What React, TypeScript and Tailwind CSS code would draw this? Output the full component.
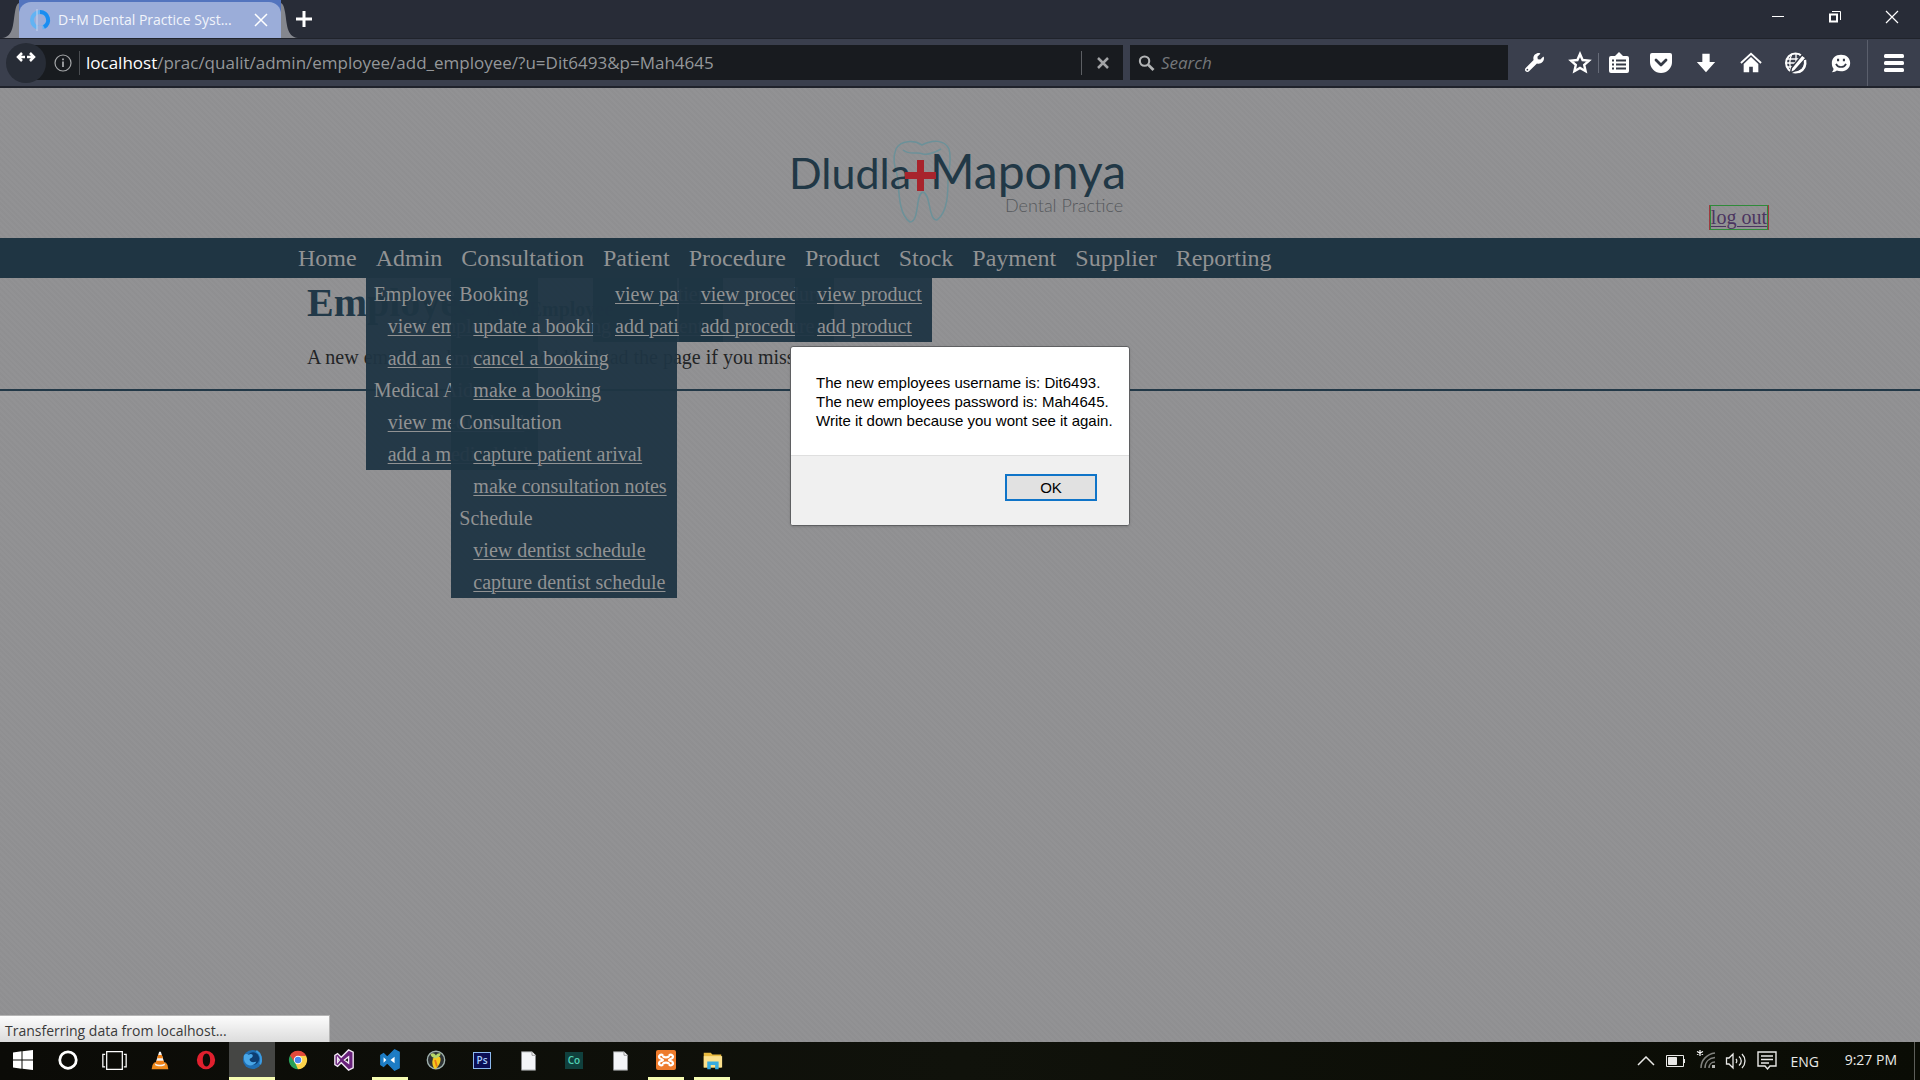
import type { ReactNode } from 'react';
import { FaWrench } from 'react-icons/fa';

type MenuEntry = { heading?: string; link?: string };
type MenuItem = { label: string; entries?: MenuEntry[] };

const MENU: MenuItem[] = [
  { label: 'Home' },
  {
    label: 'Admin',
    entries: [
      { heading: 'Employee' },
      { link: 'view employee' },
      { link: 'add an employee' },
      { heading: 'Medical Aid' },
      { link: 'view medical aid' },
      { link: 'add a medical aid' },
    ],
  },
  {
    label: 'Consultation',
    entries: [
      { heading: 'Booking' },
      { link: 'update a booking' },
      { link: 'cancel a booking' },
      { link: 'make a booking' },
      { heading: 'Consultation' },
      { link: 'capture patient arival' },
      { link: 'make consultation notes' },
      { heading: 'Schedule' },
      { link: 'view dentist schedule' },
      { link: 'capture dentist schedule' },
    ],
  },
  { label: 'Patient', entries: [{ link: 'view patient' }, { link: 'add patient' }] },
  { label: 'Procedure', entries: [{ link: 'view procedure' }, { link: 'add procedure' }] },
  { label: 'Product', entries: [{ link: 'view product' }, { link: 'add product' }] },
  { label: 'Stock' },
  { label: 'Payment' },
  { label: 'Supplier' },
  { label: 'Reporting' },
];

function Svg({ size = 24, children, label }: { size?: number; children: ReactNode; label?: string }) {
  return (
    <svg width={size} height={size} viewBox="0 0 24 24" fill="none" aria-label={label} className="shrink-0">
      {children}
    </svg>
  );
}

function ToolButton({ label, children }: { label: string; children: ReactNode }) {
  return (
    <button type="button" aria-label={label} className="flex h-9 w-[45px] shrink-0 items-center justify-center text-white">
      {children}
    </button>
  );
}

function TabStrip() {
  return (
    <div className="flex h-[39px] shrink-0 items-stretch border-b border-[#20232b] bg-[#282c37]">
      <svg width="19" height="38" viewBox="0 0 19 38" className="shrink-0">
        <path d="M2 38C14 37 13 22 15 12C16 6 17 4 19 3V38Z" fill="#85878e" />
      </svg>
      <div className="flex w-[262px] shrink-0 bg-[#5374be]">
        <div className="mt-[2px] flex flex-1 items-center rounded-t-xl bg-[#9badd9] pl-[10px] pr-3">
          <svg width="22" height="22" viewBox="0 0 22 22" fill="none" className="shrink-0">
            <circle cx="11" cy="11" r="8" stroke="#62b3f3" strokeWidth="4" />
            <path d="M11 3a8 8 0 0 1 4 15" stroke="#1a8df0" strokeWidth="4" />
            <path d="M11 17v5" stroke="#9badd9" strokeWidth="5" />
            <path d="M8 0v22" stroke="#c9d4ee" />
          </svg>
          <span className="ml-[7px] flex-1 whitespace-nowrap text-sm text-[#f1f4fb]">D+M Dental Practice Syst...</span>
          <button type="button" aria-label="Close tab" className="text-white">
            <svg width="16" height="16" viewBox="0 0 16 16" stroke="currentColor" strokeWidth="1.5">
              <path d="M2 2l12 12M14 2L2 14" />
            </svg>
          </button>
        </div>
      </div>
      <svg width="19" height="38" viewBox="0 0 19 38" className="shrink-0">
        <path d="M17 38C5 37 6 22 4 12C3 6 2 4 0 3V38Z" fill="#85878e" />
      </svg>
      <button type="button" aria-label="New tab" className="-ml-2 flex w-6 items-center justify-center text-white">
        <svg width="18" height="18" viewBox="0 0 18 18" stroke="currentColor" strokeWidth="3">
          <path d="M9 1v16M1 9h16" />
        </svg>
      </button>
      <div className="ml-auto flex items-center pb-1">
        <button type="button" aria-label="Minimize" className="flex w-[57px] justify-center text-white">
          <svg width="14" height="14" viewBox="0 0 14 14" stroke="currentColor">
            <path d="M1 6.500h12" />
          </svg>
        </button>
        <button type="button" aria-label="Restore" className="flex w-[57px] justify-center text-white">
          <svg width="14" height="14" viewBox="0 0 14 14" fill="none" stroke="currentColor">
            <path d="M2 4.500h7v7H2z" strokeWidth="2" />
            <path d="M4 1.500h8.500V10" />
          </svg>
        </button>
        <button type="button" aria-label="Close" className="flex w-[57px] justify-center text-white">
          <svg width="14" height="14" viewBox="0 0 14 14" stroke="currentColor" strokeWidth="1.200">
            <path d="M1 1l12 12M13 1L1 13" />
          </svg>
        </button>
      </div>
    </div>
  );
}

function Toolbar() {
  return (
    <div className="flex h-[49px] shrink-0 items-center border-b-2 border-[#20232c] bg-[#3a3f4d]">
      <div className="ml-[6px] flex flex-1 items-center">
        <button type="button" aria-label="Back and forward" className="z-10 flex size-10 shrink-0 items-center justify-center rounded-full bg-[#272c36]">
          <svg width="20" height="20" viewBox="0 0 20 20" fill="none" stroke="#fff" strokeWidth="2.500" className="mb-3">
            <path d="M9 10H3M6 6L2 10l4 4M11 10h6M14 6l4 4l-4 4" />
          </svg>
        </button>
        <div className="-ml-4 flex h-[35px] flex-1 items-center bg-[#181b1f] pl-6">
          <svg width="18" height="18" viewBox="0 0 18 18" fill="none" className="shrink-0">
            <circle cx="9" cy="9" r="8" stroke="#a4a6a8" strokeWidth="1.200" />
            <path d="M9 7.500V13M9 4.500v1.800" stroke="#a4a6a8" strokeWidth="1.800" />
          </svg>
          <div className="ml-[7px] h-6 w-px bg-[#4b4e52]" />
          <div className="ml-[6px] flex-1 whitespace-nowrap text-[17px] text-[#94979a]">
            <span className="text-white">localhost</span>/prac/qualit/admin/employee/add_employee/?u=Dit6493&amp;p=Mah4645
          </div>
          <div className="h-6 w-px bg-[#5c5f63]" />
          <button type="button" aria-label="Stop" className="flex w-[41px] justify-center text-[#a2a4a6]">
            <svg width="12" height="12" viewBox="0 0 12 12" stroke="currentColor" strokeWidth="2.500">
              <path d="M1 1l10 10M11 1L1 11" />
            </svg>
          </button>
        </div>
      </div>
      <label className="ml-[7px] flex h-[35px] w-[378px] shrink-0 items-center bg-[#181b1f] pl-2">
        <svg width="18" height="18" viewBox="0 0 18 18" fill="none" stroke="#b2b4b5">
          <circle cx="7" cy="7" r="5" strokeWidth="2.200" />
          <path d="M11 11l5.500 5.500" strokeWidth="3" />
        </svg>
        <input type="text" placeholder="Search" aria-label="Search" className="ml-[6px] w-full bg-transparent text-[17px] placeholder:italic placeholder:text-[#74777a]" />
      </label>
      <div className="flex shrink-0 items-center pl-1">
        <ToolButton label="Developer tools">
          <FaWrench size={19} className="-scale-x-100 rotate-90" />
        </ToolButton>
        <ToolButton label="Bookmark this page">
          <Svg size={24}>
            <path d="M12 3l2.600 6 6.400.600-4.800 4.300 1.400 6.300L12 17l-5.600 3.200 1.400-6.300L3 9.600l6.400-.600z" stroke="#fff" strokeWidth="2.400" />
          </Svg>
        </ToolButton>
        <div className="-ml-1 h-5 w-px bg-[#666b78]" />
        <button type="button" aria-label="Show bookmarks" className="flex h-9 w-[39px] shrink-0 items-center justify-center">
          <Svg size={24}>
            <path d="M4 5h4l4-4 4 4h4a2 2 0 0 1 2 2v13a2 2 0 0 1-2 2H4a2 2 0 0 1-2-2V7a2 2 0 0 1 2-2z" fill="#fff" />
            <path d="M5 9.500h2M9 9.500h10M5 13.500h2M9 13.500h10M5 17.500h2M9 17.500h10" stroke="#343945" strokeWidth="1.800" />
          </Svg>
        </button>
        <ToolButton label="Save to Pocket">
          <Svg size={24}>
            <path d="M3 2h18a2 2 0 0 1 2 2v7a11 11 0 0 1-22 0V4a2 2 0 0 1 2-2z" fill="#fff" />
            <path d="M7 9l5 5 5-5" stroke="#343945" strokeWidth="2.800" strokeLinecap="round" strokeLinejoin="round" />
          </Svg>
        </ToolButton>
        <ToolButton label="Downloads">
          <Svg size={22}>
            <path d="M8 2h8v9h6L12 22 2 11h6z" fill="#fff" />
          </Svg>
        </ToolButton>
        <ToolButton label="Home">
          <Svg size={22}>
            <path d="M1 12L12 2l11 10" stroke="#fff" strokeWidth="2" />
            <path d="M4 13l8-7.500L20 13v9h-6v-6h-4v6H4z" fill="#fff" />
          </Svg>
        </ToolButton>
        <ToolButton label="Web editor">
          <Svg size={24}>
            <circle cx="11.500" cy="12" r="9.500" stroke="#fff" strokeWidth="2" />
            <path d="M3 8h15M2 12h12M3 16h8M8 3c-3 5-3 13 0 18M12 2v13M16 4c1 2 2 4 2 7" stroke="#fff" strokeWidth="1.300" />
            <path d="M6.500 22l1-5L18 4l4 3L10.500 20z" fill="#fff" stroke="#343945" strokeWidth="1.400" />
            <path d="M21 9c1 5-1 10-6 12" stroke="#fff" strokeWidth="2.500" />
          </Svg>
        </ToolButton>
        <ToolButton label="Chat">
          <Svg size={20}>
            <path d="M12 2c6.500 0 11 4 11 10s-4.500 10-11 10c-2 0-3.500-.400-5-1-1.500 1.300-3.500 2-6 2 1.500-1.200 2-2.500 2-4-1.400-2-2-4-2-7C1 6 5.500 2 12 2z" fill="#fff" />
            <path d="M8.500 7v3M15.500 7v3" stroke="#343945" strokeWidth="2.500" />
            <path d="M6 13c2 5 10 5 12 0" stroke="#343945" strokeWidth="2" />
          </Svg>
        </ToolButton>
        <div className="ml-1 h-[46px] w-px bg-[#5a5f6c]" />
        <button type="button" aria-label="Open menu" className="flex h-9 w-[52px] shrink-0 items-center justify-center">
          <svg width="20" height="18" viewBox="0 0 20 18" fill="#fff">
            <rect y="0" width="20" height="4" rx="1.500" />
            <rect y="7" width="20" height="4" rx="1.500" />
            <rect y="14" width="20" height="4" rx="1.500" />
          </svg>
        </button>
      </div>
    </div>
  );
}

function Logo() {
  return (
    <svg width="340" height="90" viewBox="0 0 340 90" aria-label="Dludla+Maponya Dental Practice" className="font-[Lato,sans-serif]">
      <path
        d="M132 11c-8-5-21-5-26 4c-5 12 1 22 2 31c1 13 1 35 12 42c10-1 5-28 13-30c8 2 5 28 14 28c11-8 11-28 11-41c1-10 4-20 1-30c-5-10-17-9-27-4zM113 16c8 6 13 1 20 4c5 1 11-1 18-5"
        fill="none"
        stroke="#6c9199"
        strokeWidth="1.500"
      />
      <text x="-1" y="55" fontSize="43" fill="#213846">Dludla</text>
      <text x="140" y="55" fontSize="48" fill="#213846">Maponya</text>
      <path d="M127 26h7v12h12v7h-12v12h-7V45h-12v-7h12z" fill="#a8242c" />
      <text x="215" y="78" fontSize="18" fontWeight="300" fill="#55585c">Dental Practice</text>
    </svg>
  );
}

function NavBar() {
  return (
    <nav className="relative z-10 bg-[#1f3543] pl-72">
      <ul className="flex">
        {MENU.map((item) => (
          <li key={item.label} className="relative flex h-10 items-center pl-[10px] pr-[9px]">
            <span className="text-2xl text-[#919293]">{item.label}</span>
            {item.entries && (
              <ul className="absolute left-0 top-full whitespace-nowrap bg-[#1f3543]/95 pl-2 pr-[10px] text-xl leading-8 text-[#919293]">
                {item.entries.map((entry) =>
                  entry.heading ? (
                    <li key={entry.heading}>{entry.heading}</li>
                  ) : (
                    <li key={entry.link} className="pl-[14px]">
                      <a href="#" className="underline decoration-1 underline-offset-2">{entry.link}</a>
                    </li>
                  ),
                )}
              </ul>
            )}
          </li>
        ))}
      </ul>
    </nav>
  );
}

function AlertDialog() {
  return (
    <div role="alertdialog" aria-label="New employee details" className="flex flex-col overflow-hidden rounded-[3px] border border-[#5f6062] bg-white font-['Liberation_Sans',sans-serif] text-[15px] leading-[19px] text-black shadow-sm">
      <div className="w-[338px] whitespace-nowrap pb-[25px] pl-[25px] pt-[26px]">
        <p>The new employees username is: Dit6493.</p>
        <p>The new employees password is: Mah4645.</p>
        <p>Write it down because you wont see it again.</p>
      </div>
      <div className="flex justify-end border-t border-[#dfdfdf] bg-[#f0f0f0] pb-[24px] pr-8 pt-[18px]">
        <button type="button" className="h-[27px] w-[92px] border-2 border-[#0f74c8] bg-[#e1e1e1]">OK</button>
      </div>
    </div>
  );
}

function Page() {
  return (
    <div className="relative min-h-0 flex-1 bg-[#919193] bg-[repeating-linear-gradient(45deg,rgba(0,0,0,0.01)_0_2px,rgba(255,255,255,0.01)_2px_4px)] font-['Liberation_Serif',serif]">
      <header className="grid h-[150px] grid-cols-3 px-[151px]">
        <div className="col-start-2 mt-[46px] justify-self-center">
          <Logo />
        </div>
        <div className="mb-2 self-end justify-self-end border-x border-[#a03a3f] text-xl leading-[23px]">
          <a href="#" className="block border border-[#2f8a3a] text-[#4b3560] underline decoration-1 underline-offset-2">log out</a>
        </div>
      </header>
      <NavBar />
      <main className="h-[113px] border-b-2 border-[#223847] pl-[307px]">
        <h1 className="flex items-baseline gap-[10px] text-[40px] font-bold leading-[50px] text-[#213848]">
          Employee<span className="text-xl">New Employee</span>
        </h1>
        <p className="mt-[15px] text-xl leading-7 text-[#222426]">
          A new employee has been added, reload the page if you missed it.
        </p>
      </main>
      <div className="absolute inset-x-0 top-[258px] z-20 flex justify-center">
        <AlertDialog />
      </div>
      <div className="absolute bottom-0 left-0 h-[27px] w-[330px] border-r border-t border-[#b5b5b5] bg-gradient-to-b from-[#fcfcfc] to-[#dcdcdc] pl-[5px] text-sm leading-[30px] text-[#3a3a3a]">
        <span className="font-['Open_Sans',sans-serif]">Transferring data from localhost...</span>
      </div>
    </div>
  );
}

function VsMark({ fill, stroke }: { fill: string; stroke: string }) {
  return (
    <Svg size={22}>
      <path d="M17 1l5 2.500v17L17 23l-8-8-4 4-3-2V7l3-2 4 4zM5 9.500v5L7 12zM17 8.500L12.500 12l4.500 3.500z" fill={fill} stroke={stroke} strokeWidth="1.500" fillRule="evenodd" />
      {fill === stroke && <path d="M5 9v6l3-3zM17 8.500L12.500 12l4.500 3.500z" fill="#fff" />}
    </Svg>
  );
}

function DocIcon() {
  return (
    <Svg size={21}>
      <path d="M4 2h12l4 4v17H4z" fill="#f4f5f8" stroke="#8c8d8f" />
      <path d="M16 2v4h4" fill="#fff" stroke="#8c8d8f" />
    </Svg>
  );
}

type App = { name: string; icon: ReactNode; state?: 'active' | 'open' };

const APPS: App[] = [
  {
    name: 'Start',
    icon: (
      <Svg size={24}>
        <path d="M2 4.500l8.500-1.200v8.200H2zM11.500 3.200L22 2v9.500H11.500zM2 12.500h8.500v8.200L2 19.500zM11.500 12.500H22V22l-10.500-1.200z" fill="#fff" />
      </Svg>
    ),
  },
  { name: 'Cortana', icon: <Svg size={22}><circle cx="12" cy="12" r="9" stroke="#fff" strokeWidth="3" /></Svg> },
  {
    name: 'Task view',
    icon: (
      <Svg size={25}>
        <path d="M4.500 3.500h15v17h-15zM3 6H.800v12H3M21 6h2.200v12H21" stroke="#fff" strokeWidth="1.200" />
      </Svg>
    ),
  },
  {
    name: 'VLC',
    icon: (
      <Svg size={20}>
        <path d="M3 18l2-3h14l2 3 1 5H2z" fill="#ef8a1c" />
        <path d="M11 2h2l5 16c-2 2-10 2-12 0z" fill="#f3f3f3" />
        <path d="M9.800 6h4.400l1.300 4h-7zM7.500 13h9l1 3.500c-3 1.500-8 1.500-11 0z" fill="#f07f13" />
      </Svg>
    ),
  },
  {
    name: 'Opera',
    icon: (
      <Svg size={22}>
        <path d="M12 2a10 10 0 1 0 0 20 10 10 0 1 0 0-20zM12.500 5c2.500 0 4 3 4 7s-1.500 7-4 7-4-3-4-7 1.500-7 4-7z" fill="#e0202e" fillRule="evenodd" />
      </Svg>
    ),
  },
  {
    name: 'Firefox Developer Edition',
    state: 'active',
    icon: (
      <Svg size={23}>
        <circle cx="12" cy="12" r="10" fill="#1f6fb4" />
        <circle cx="12.500" cy="11" r="6.500" fill="#0d3d72" />
        <path d="M3 8c2-3 4-1 5-1 3-2 5 0 4 2s-3 1-3 3 3 4 7 2c-1 4-8 6-11 2-2-2-2-5-2-8z" fill="#49a7e8" />
        <path d="M16 3c5 3 6 9 4 14" stroke="#3c9be0" strokeWidth="2" />
      </Svg>
    ),
  },
  {
    name: 'Chrome',
    icon: (
      <Svg size={20}>
        <path d="M12 12L2.500 6.500A11 11 0 0 1 21.500 6.500z" fill="#e24a3b" />
        <path d="M12 12l9.500-5.500A11 11 0 0 1 12 23z" fill="#fdd34a" />
        <path d="M12 12v11A11 11 0 0 1 2.500 6.500z" fill="#28a15a" />
        <path d="M12 7h10L16 14.500 12 23l-4-9z" fill="#fdd34a" />
        <path d="M12 7h9.700A11 11 0 0 0 2.500 6.500L7.700 14.500z" fill="#e24a3b" />
        <circle cx="12" cy="12" r="5" fill="#fff" />
        <circle cx="12" cy="12" r="3.900" fill="#4a87ee" />
      </Svg>
    ),
  },
  { name: 'Visual Studio', icon: <VsMark fill="#68217a" stroke="#f0e6f3" /> },
  { name: 'Visual Studio Code', state: 'open', icon: <VsMark fill="#1d7cc4" stroke="#1d7cc4" /> },
  {
    name: 'FL Studio',
    icon: (
      <Svg size={22}>
        <circle cx="12" cy="12" r="9.500" fill="#2d3234" stroke="#9fb0ad" strokeWidth="1.500" />
        <path d="M9 10c3-3 8-3 8 1 0 5-3 9-6 11-3-3-4-8-2-12z" fill="#f5c91f" />
        <path d="M11 12l2 7" stroke="#e87817" strokeWidth="2" />
        <path d="M6 6c2-2 4-2 6 1 1-2 3-3 5-2 0 3-2 4-5 5-3 0-5-1-6-4z" fill="#b5d66a" />
      </Svg>
    ),
  },
  {
    name: 'Photoshop',
    icon: <span className="flex h-[17px] w-[18px] items-center justify-center border border-[#8db9ee] bg-[#0b0f55] text-[10px] font-semibold text-[#a5cdfa]">Ps</span>,
  },
  { name: 'Document', icon: <DocIcon /> },
  {
    name: 'Edge Code',
    icon: <span className="flex h-[17px] w-[18px] items-center justify-center bg-[#10403d] text-[10px] font-semibold text-[#51d1b4]">Co</span>,
  },
  { name: 'Second document', icon: <DocIcon /> },
  {
    name: 'XAMPP',
    state: 'open',
    icon: (
      <Svg size={24}>
        <rect x="2" y="2" width="20" height="20" rx="2" fill="#ee7b2c" />
        <path d="M9 7.500c-2-2-5 0-3.500 2.500C6.500 11 9 11 9 12s-2.500 1-3.500 2c-1.500 2.500 1.500 4.500 3.500 2.500M15 7.500c2-2 5 0 3.500 2.500-1 1-3.500 1-3.500 2s2.500 1 3.500 2c1.500 2.500-1.500 4.500-3.500 2.500M9 7.500c0 2.500 6 2.500 6 0M9 16.500c0-2.500 6-2.500 6 0" stroke="#fff" strokeWidth="2.200" />
      </Svg>
    ),
  },
  {
    name: 'File Explorer',
    state: 'open',
    icon: (
      <Svg size={21}>
        <path d="M2 3h8l2 2h10v15H2z" fill="#e8b93f" />
        <path d="M2 7h21v13H2z" fill="#fbe08c" />
        <path d="M6 22v-9h13v9h-4v-5h-5v5z" fill="#37abe0" />
      </Svg>
    ),
  },
];

function Taskbar() {
  return (
    <footer className="flex h-[38px] shrink-0 bg-gradient-to-r from-[#0b0b07] via-[#10120b] to-[#0a0c05] text-[#e9e9e7]">
      <div className="flex">
        {APPS.map((app) => (
          <button
            key={app.name}
            type="button"
            aria-label={app.name}
            className={
              app.state === 'active'
                ? 'relative flex w-[46px] items-center justify-center border-b-[3px] border-[#f6fcb2] bg-[#454644]'
                : 'relative flex w-[46px] items-center justify-center border-b-[3px] border-transparent pt-px first:w-[45px]'
            }
          >
            {app.icon}
            {app.state === 'open' && <span className="absolute inset-x-[5px] -bottom-[3px] h-[3px] bg-[#f6fcb2]" />}
          </button>
        ))}
      </div>
      <div className="ml-auto flex items-center">
        <button type="button" aria-label="Show hidden icons" className="flex w-[30px] justify-center">
          <svg width="18" height="10" viewBox="0 0 18 10" fill="none" stroke="currentColor" strokeWidth="1.500"><path d="M1 9l8-8 8 8" /></svg>
        </button>
        <button type="button" aria-label="Battery" className="flex w-[30px] justify-center">
          <svg width="20" height="12" viewBox="0 0 20 12" fill="none" stroke="currentColor"><path d="M.500.500h17v11H.500zM18.500 4v4" /><path d="M2.500 2.500h8v7h-8z" fill="currentColor" /></svg>
        </button>
        <button type="button" aria-label="Network" className="flex w-[30px] justify-center pb-1">
          <svg width="20" height="20" viewBox="0 0 20 20" fill="none" strokeWidth="1.500">
            <path d="M5 19C5 11 11 5 19 4M9 19c0-6 4-10 10-10.500M13 19c0-3 2-6 6-6" stroke="#82837f" />
            <path d="M16 16h3v3h-3z" fill="#b5b5b2" />
            <path d="M4 1v6M1 2.500l6 3M7 2.500l-6 3" stroke="#fff" strokeWidth="1.200" />
          </svg>
        </button>
        <button type="button" aria-label="Volume" className="flex w-[30px] justify-center">
          <svg width="22" height="20" viewBox="0 0 22 20" fill="none" stroke="currentColor" strokeWidth="1.300"><path d="M1.500 7H4l4-4v14l-4-4H1.500zM11 8c1 1 1 3 0 4M14 5.500c3 2.500 3 6.500 0 9M17 3c4 4 4 10 0 14" /></svg>
        </button>
        <button type="button" aria-label="Notifications" className="flex w-[32px] justify-center">
          <svg width="20" height="20" viewBox="0 0 20 20" fill="none" stroke="currentColor" strokeWidth="1.400"><path d="M1 1h18v14h-6l-2.500 3L8 15H1zM4 5h12M4 8.500h12M4 12h8" /></svg>
        </button>
        <button type="button" className="ml-[6px] w-8 pt-px text-sm">ENG</button>
        <button type="button" className="ml-6 whitespace-nowrap pb-[2px] text-sm">9:27 PM</button>
        <span className="ml-[17px] h-[38px] w-px bg-[#5d5e5a]" />
        <span className="w-[5px]" />
      </div>
    </footer>
  );
}

export default function App() {
  return (
    <div className="flex h-screen flex-col overflow-hidden font-['Open_Sans',sans-serif]">
      <TabStrip />
      <Toolbar />
      <Page />
      <Taskbar />
    </div>
  );
}
